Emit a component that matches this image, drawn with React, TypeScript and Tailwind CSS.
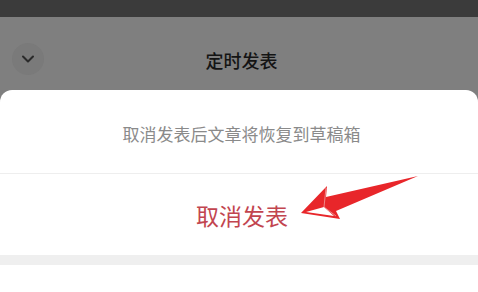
import React from "react";

export default function App() {
  return (
    <div className="relative w-[478px] h-[292px] overflow-hidden bg-[#7f7f7f]" style={{ fontFamily: '"Noto Sans CJK SC", "Noto Sans", sans-serif' }}>
      <div className="h-[17px] bg-[#3b3b3b]" />
      <div className="relative h-[73px] flex items-center justify-center pl-[5px]">
        <div className="absolute left-[12px] top-[26px] w-[32px] h-[32px] rounded-full bg-[#7a7a7a] flex items-center justify-center">
          <svg width="14" height="10" viewBox="0 0 14 10">
            <path d="M2 2.5 L7 7.5 L12 2.5" fill="none" stroke="#2a2a2a" strokeWidth="2" strokeLinecap="round" strokeLinejoin="round" />
          </svg>
        </div>
        <span className="text-[18px] font-medium text-[#141414] mt-[13px]">定时发表</span>
      </div>
      <div className="bg-white rounded-t-[12px] h-[202px] flex flex-col">
        <div className="h-[84px] flex items-center justify-center border-b border-[#eeeeee] pl-[5px]">
          <span className="text-[17px] text-[#8a8a8a] mt-[4px]">取消发表后文章将恢复到草稿箱</span>
        </div>
        <div className="h-[81px] flex items-center justify-center pl-[6px]">
          <span className="text-[23px] text-[#c2454f] mt-[2px]">取消发表</span>
        </div>
        <div className="h-[10px] bg-[#efefef]" />
        <div className="flex-1 bg-white" />
      </div>
      <svg className="absolute left-0 top-0" width="478" height="292" viewBox="0 0 478 292">
        <polygon points="301,213 327,186 326,197 418,176 336,211 340,219" fill="#e8262a" />
        <polygon points="306,212 324,207 334,216" fill="#ffffff" />
        <polyline points="326,188 324,207 336,216" fill="none" stroke="#f0a0a0" strokeWidth="0.8" />
      </svg>
    </div>
  );
}
